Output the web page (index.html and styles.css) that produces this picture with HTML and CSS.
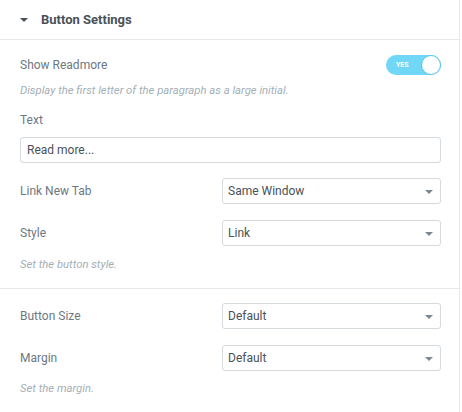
FILE: index.html
```html
<!DOCTYPE html>
<html>
<head>
<meta charset="utf-8">
<link rel="stylesheet" href="styles.css">
</head>
<body>
<div class="panel">
  <div class="section-head">
    <span class="caret"></span>
    <span class="section-title">Button Settings</span>
  </div>
  <div class="section">
    <div class="row row-toggle">
      <span class="label">Show Readmore</span>
      <span class="switch"><span class="switch-text">YES</span><span class="knob"></span></span>
    </div>
    <div class="desc desc-first">Display the first letter of the paragraph as a large initial.</div>
    <div class="label label-block">Text</div>
    <div class="input">Read more...</div>
    <div class="row row-select gap-15">
      <span class="label">Link New Tab</span>
      <div class="select">Same Window<span class="arrow"></span></div>
    </div>
    <div class="row row-select gap-16">
      <span class="label">Style</span>
      <div class="select">Link<span class="arrow"></span></div>
    </div>
    <div class="desc desc-after">Set the button style.</div>
  </div>
  <div class="section section-2">
    <div class="row row-select">
      <span class="label">Button Size</span>
      <div class="select">Default<span class="arrow"></span></div>
    </div>
    <div class="row row-select gap-16">
      <span class="label">Margin</span>
      <div class="select">Default<span class="arrow"></span></div>
    </div>
    <div class="desc desc-last">Set the margin.</div>
  </div>
</div>
</body>
</html>
```
FILE: styles.css
```css
html, body {
  margin: 0;
  padding: 0;
  background: #ffffff;
}
body {
  font-family: Roboto, "Liberation Sans", sans-serif;
  color: #6d7882;
}
.panel {
  width: 460px;
  height: 412px;
  border-right: 1px solid #e6e9ec;
  box-sizing: border-box;
  background: #ffffff;
}
.section-head {
  height: 39px;
  border-bottom: 1px solid #e6e9ec;
  display: flex;
  align-items: center;
  padding-left: 20px;
}
.caret {
  width: 0;
  height: 0;
  border-left: 4px solid transparent;
  border-right: 4px solid transparent;
  border-top: 4px solid #495157;
  margin-right: 13px;
  margin-top: 1px;
}
.section-title {
  font-size: 13px;
  font-weight: 700;
  color: #495157;
}
.section {
  padding: 15px 18px 16px 20px;
  border-bottom: 1px solid #e6e9ec;
}
.section-2 {
  padding-top: 14px;
  border-bottom: none;
}
.row {
  display: flex;
  align-items: center;
  justify-content: space-between;
}
.row-toggle {
  height: 20px;
}
.label {
  font-size: 12px;
  line-height: 16px;
  color: #6d7882;
}
.label-block {
  display: block;
  margin-top: 14px;
}
.switch {
  position: relative;
  width: 55px;
  height: 20px;
  border-radius: 10px;
  background: #71d7f7;
  box-sizing: border-box;
}
.switch-text {
  position: absolute;
  left: 10px;
  top: 0;
  line-height: 20px;
  font-size: 7px;
  font-weight: 700;
  color: #ffffff;
}
.knob {
  position: absolute;
  right: 0;
  top: 0;
  width: 20px;
  height: 20px;
  border-radius: 50%;
  background: #ffffff;
  border: 1.5px solid #5bc6e6;
  box-sizing: border-box;
}
.desc {
  font-size: 11.3px;
  line-height: 14px;
  font-style: italic;
  color: #a4afb7;
}
.desc-first {
  margin-top: 9px;
}
.desc-after {
  margin-top: 12px;
}
.desc-last {
  margin-top: 11px;
}
.input {
  margin-top: 9px;
  height: 26px;
  border: 1px solid #d5dadf;
  border-radius: 3px;
  box-sizing: border-box;
  padding-left: 6px;
  font-size: 12px;
  line-height: 24px;
  color: #495157;
}
.row-select {
  height: 26px;
}
.gap-15 {
  margin-top: 15px;
}
.gap-16 {
  margin-top: 16px;
}
.select {
  position: relative;
  width: 219px;
  height: 26px;
  border: 1px solid #d5dadf;
  border-radius: 3px;
  box-sizing: border-box;
  padding-left: 5px;
  font-size: 12px;
  line-height: 24px;
  color: #495157;
}
.arrow {
  position: absolute;
  right: 7px;
  top: 11px;
  width: 0;
  height: 0;
  border-left: 4px solid transparent;
  border-right: 4px solid transparent;
  border-top: 4px solid #7d8790;
}
```
